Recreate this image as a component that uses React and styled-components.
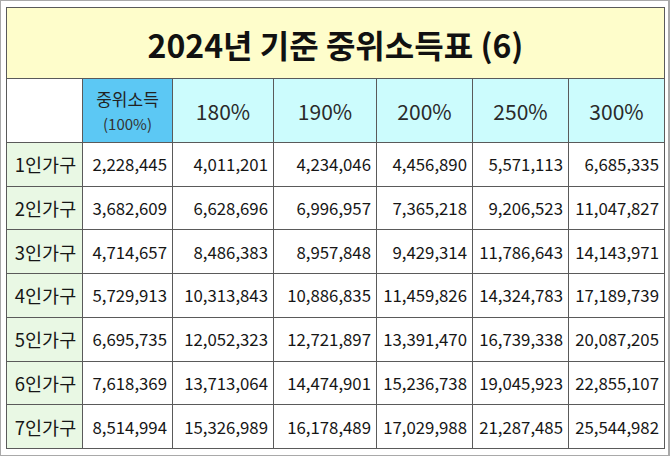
import styled, { createGlobalStyle } from "styled-components";

const Global = createGlobalStyle`
  html, body { margin: 0; padding: 0; background: #fff; }
  body { font-family: "Noto Sans CJK KR", "Noto Sans", sans-serif; }
`;

const percents = ["180%", "190%", "200%", "250%", "300%"];

const rows = [
  ["1인가구", "2,228,445", "4,011,201", "4,234,046", "4,456,890", "5,571,113", "6,685,335"],
  ["2인가구", "3,682,609", "6,628,696", "6,996,957", "7,365,218", "9,206,523", "11,047,827"],
  ["3인가구", "4,714,657", "8,486,383", "8,957,848", "9,429,314", "11,786,643", "14,143,971"],
  ["4인가구", "5,729,913", "10,313,843", "10,886,835", "11,459,826", "14,324,783", "17,189,739"],
  ["5인가구", "6,695,735", "12,052,323", "12,721,897", "13,391,470", "16,739,338", "20,087,205"],
  ["6인가구", "7,618,369", "13,713,064", "14,474,901", "15,236,738", "19,045,923", "22,855,107"],
  ["7인가구", "8,514,994", "15,326,989", "16,178,489", "17,029,988", "21,287,485", "25,544,982"],
];

export default function App() {
  return (
    <>
      <Global />
      <Frame>
        <Table>
          <Title>2024년 기준 중위소득표 (6)</Title>
          <Corner />
          <MedianHead>
            <MedianLabel>중위소득</MedianLabel>
            <MedianPct>(100%)</MedianPct>
          </MedianHead>
          {percents.map((p) => (
            <PercentHead key={p}>{p}</PercentHead>
          ))}
          {rows.map((row) =>
            row.map((value, i) =>
              i === 0 ? (
                <HouseCell key={row[0]}>{value}</HouseCell>
              ) : (
                <NumCell key={row[0] + i}>{value}</NumCell>
              )
            )
          )}
        </Table>
      </Frame>
    </>
  );
}

const Frame = styled.div`
  width: 670px;
  height: 456px;
  box-sizing: border-box;
  border: 1px solid #a9a9a9;
  border-right-width: 2px;
  padding: 6px 0 0 5px;
  background: #fff;
`;

const Table = styled.div`
  display: grid;
  grid-template-columns: 75px 89px 100px 102px 95px 95px 95px;
  grid-template-rows: 70px 63px repeat(7, 1fr);
  gap: 1px;
  padding: 1px;
  width: max-content;
  height: 442px;
  box-sizing: border-box;
  background: #5a5a5a;
`;

const Cell = styled.div`
  display: flex;
  align-items: center;
  color: #161616;
  font-family: "Noto Sans CJK KR", "Noto Sans", sans-serif;
`;

const Title = styled(Cell)`
  grid-column: 1 / -1;
  justify-content: center;
  background: #fefdcb;
  font-size: 32px;
  font-weight: 700;
  color: #111;
  padding-top: 1px;
`;

const Corner = styled(Cell)`
  background: #fff;
`;

const MedianHead = styled(Cell)`
  flex-direction: column;
  justify-content: center;
  gap: 4px;
  background: #5cc8f4;
`;

const MedianLabel = styled.div`
  font-size: 17px;
  line-height: 22px;
  color: #222;
`;

const MedianPct = styled.div`
  font-size: 15px;
  line-height: 20px;
  color: #333;
`;

const PercentHead = styled(Cell)`
  justify-content: center;
  background: #ccfcfd;
  font-size: 21px;
  color: #2a2a2a;
`;

const HouseCell = styled(Cell)`
  justify-content: center;
  background: #e9f8e4;
  font-size: 18.5px;
  padding-left: 2px;
`;

const NumCell = styled(Cell)`
  justify-content: flex-end;
  padding-right: 5px;
  background: #fff;
  font-size: 16.8px;
`;
